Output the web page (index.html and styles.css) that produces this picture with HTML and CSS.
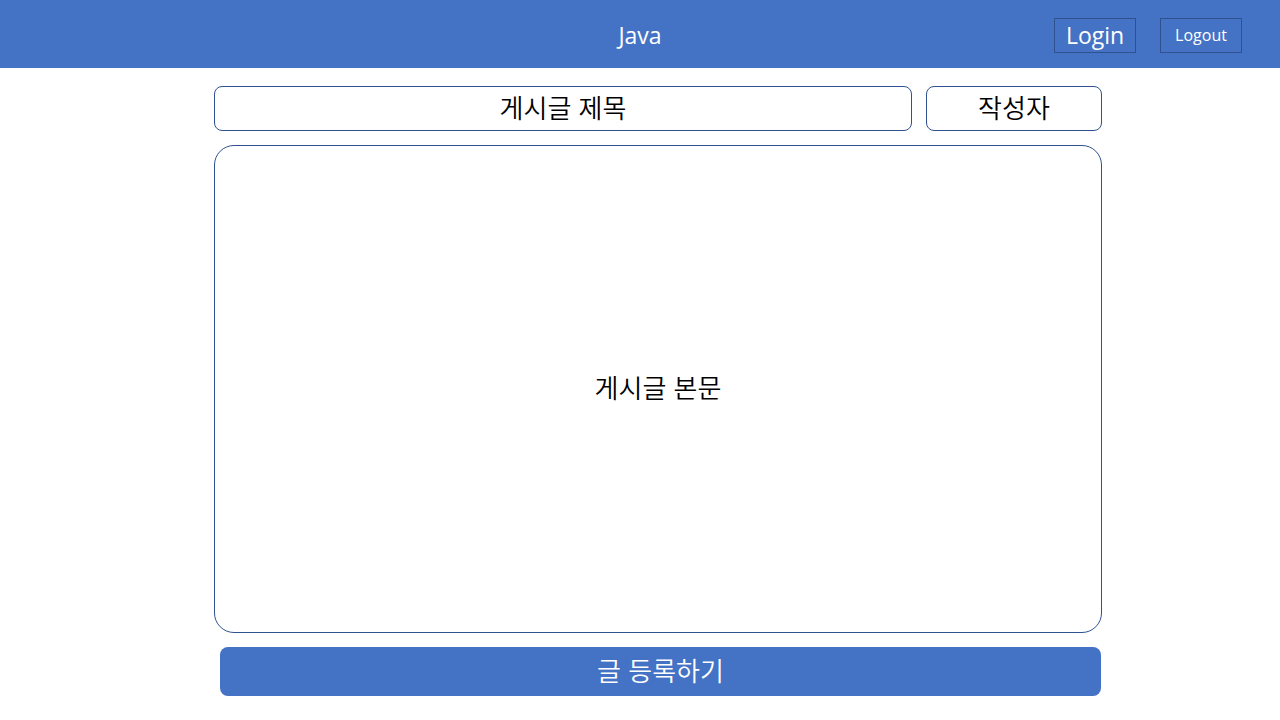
FILE: index.html
```html
<!DOCTYPE html>
<html lang="ko">
<head>
<meta charset="utf-8">
<meta name="viewport" content="width=device-width, initial-scale=1">
<title>Java</title>
<link rel="stylesheet" href="styles.css">
</head>
<body>
<header class="topbar">
  <h1 class="brand">Java</h1>
  <nav class="account">
    <button type="button" class="account-button">Login</button>
    <button type="button" class="account-button account-button-small">Logout</button>
  </nav>
</header>
<main class="page">
  <form class="post-form">
    <div class="post-head">
      <input class="field" type="text" name="title" placeholder="게시글 제목" aria-label="게시글 제목">
      <input class="field" type="text" name="author" placeholder="작성자" aria-label="작성자">
    </div>
    <textarea class="field post-body" name="content" placeholder="게시글 본문" aria-label="게시글 본문"></textarea>
    <button class="submit" type="submit">글 등록하기</button>
  </form>
</main>
</body>
</html>
```
FILE: styles.css
```css
* {
  box-sizing: border-box;
}

body {
  margin: 0;
  min-height: 100vh;
  display: flex;
  flex-direction: column;
  background: #ffffff;
  color: #000000;
  font-family: "Noto Sans CJK KR", sans-serif;
}

button,
input,
textarea {
  margin: 0;
  font: inherit;
  color: inherit;
}

.topbar {
  display: grid;
  grid-template-columns: 1fr auto 1fr;
  align-items: center;
  padding: 16px 38px 14px;
  background: #4472c4;
  color: #ffffff;
  font-family: "Open Sans", "Noto Sans", sans-serif;
}

.brand {
  grid-column: 2;
  margin: 0;
  font-size: 23px;
  font-weight: 400;
  line-height: 38px;
}

.account {
  display: flex;
  justify-content: flex-end;
  gap: 24px;
}

.account-button {
  width: 82px;
  height: 35px;
  padding: 0;
  border: 1px solid #2f528f;
  background: transparent;
  font-size: 23px;
  font-weight: 400;
  line-height: 32px;
}

.account-button-small {
  font-size: 16px;
}

.page {
  flex: 1;
  display: flex;
  padding: 18px 178px 24px 214px;
}

.post-form {
  flex: 1;
  display: flex;
  flex-direction: column;
  gap: 14px;
}

.post-head {
  display: grid;
  grid-template-columns: minmax(0, 1fr) 176px;
  gap: 14px;
}

.field {
  width: 100%;
  height: 45px;
  padding: 0 8px 4px;
  border: 1px solid #2f528f;
  border-radius: 8px;
  background: #ffffff;
  font-size: 26px;
  font-weight: 350;
  line-height: 38px;
  text-align: center;
}

.field::placeholder {
  color: #000000;
  opacity: 1;
}

.post-body {
  flex: 1;
  height: auto;
  border-radius: 20px;
  align-content: center;
  resize: none;
}

.submit {
  height: 49px;
  margin: 0 1px 0 6px;
  padding: 0 0 3px;
  border: 0;
  border-radius: 8px;
  background: #4472c4;
  color: #ffffff;
  font-size: 26px;
  font-weight: 350;
  line-height: 40px;
}
```
